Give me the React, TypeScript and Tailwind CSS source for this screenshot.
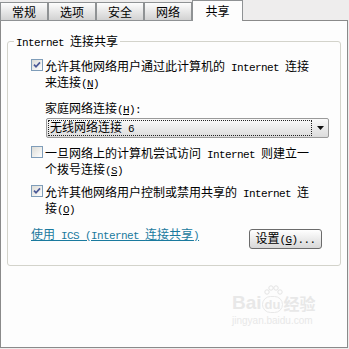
import React from "react";

function L({ children }: { children: React.ReactNode }) {
  return (
    <span className="font-['Liberation_Mono',monospace] text-[11px] tracking-[-0.6px]">
      {children}
    </span>
  );
}

function Check({ checked }: { checked: boolean }) {
  return (
    <div className="w-[12px] h-[12px] shrink-0 border border-[#7f9db9] bg-linear-to-br from-[#dcdcd7] to-white flex items-center justify-center">
      {checked && (
        <svg width="8" height="8" viewBox="0 0 8 8">
          <path d="M1 3.6 L3 5.8 L7 1.4" stroke="#4a5896" strokeWidth="1.7" fill="none" />
        </svg>
      )}
    </div>
  );
}

function Tab({ label, selected }: { label: string; selected?: boolean }) {
  if (selected) {
    return (
      <div className="w-[51px] h-[21px] bg-[#fdfdfd] border border-b-0 border-[#8f9294] flex items-start justify-center pt-[3px] leading-[14px]">
        {label}
      </div>
    );
  }
  return (
    <div className="w-[48px] h-[19px] bg-linear-to-b from-[#fdfdfd] to-[#d2d2d2] border border-[#8f9294] flex items-start justify-center pt-[2px] leading-[14px]">
      {label}
    </div>
  );
}

export default function App() {
  return (
    <div className="relative w-[349px] h-[349px] overflow-hidden bg-[#eeeded] text-black font-['Noto_Sans_CJK_SC',sans-serif] text-[12px] leading-[13px]">
      <div className="relative z-10 flex items-end h-[21px]">
        <Tab label="常规" />
        <Tab label="选项" />
        <Tab label="安全" />
        <Tab label="网络" />
        <Tab label="共享" selected />
      </div>
      <div className="mt-[-1px] w-[348px] h-[328px] bg-[#fdfdfd] border border-[#8a8a8a] flex flex-col">
        <div className="relative ml-[6px] mt-[20px] w-[334px] border border-[#d3d3cb] rounded-[3px] pt-[17px] pb-[16px]">
          <div className="absolute left-[6px] top-[-8px] px-[2px] bg-[#fdfdfd] whitespace-nowrap">
            <L>Internet </L>连接共享
          </div>

          <div className="flex items-start gap-[2px] pl-[23px]">
            <Check checked />
            <div className="whitespace-nowrap">
              <div>
                允许其他网络用户通过此计算机的<L> Internet </L>连接
              </div>
              <div>
                来连接<L>(<span className="underline">N</span>)</L>
              </div>
            </div>
          </div>

          <div className="mt-[10px] pl-[37px] whitespace-nowrap">
            家庭网络连接<L>(<span className="underline">H</span>):</L>
          </div>

          <div className="mt-[1px] ml-[38px] w-[283px] h-[20px] border border-[#9a9a9a] rounded-[2px] bg-linear-to-b from-[#fafafa] to-[#dcdcdc] flex">
            <div className="flex-1 p-[1px]">
              <div className="h-full border border-dotted border-[#222] flex items-center pl-[1px] whitespace-pre">
                <span>
                  无线网络连接<L> 6</L>
                </span>
              </div>
            </div>
            <div className="w-[15px] flex items-center justify-center">
              <svg width="7" height="4" viewBox="0 0 7 4">
                <path d="M0 0 H7 L3.5 4 Z" fill="#111" />
              </svg>
            </div>
          </div>

          <div className="mt-[8px] flex items-start gap-[2px] pl-[23px]">
            <Check checked={false} />
            <div className="whitespace-nowrap">
              <div>
                一旦网络上的计算机尝试访问<L> Internet </L>则建立一
              </div>
              <div>
                个拨号连接<L>(<span className="underline">S</span>)</L>
              </div>
            </div>
          </div>

          <div className="mt-[7px] flex items-start gap-[2px] pl-[23px]">
            <Check checked />
            <div className="whitespace-nowrap">
              <div>
                允许其他网络用户控制或禁用共享的<L> Internet </L>连
              </div>
              <div>
                接<L>(<span className="underline">O</span>)</L>
              </div>
            </div>
          </div>

          <div className="mt-[10px] flex items-start justify-between pl-[23px] pr-[18px]">
            <div className="text-[#1a7a9e] underline whitespace-nowrap">
              使用<L> ICS (Internet </L>连接共享<L>)</L>
            </div>
            <div className="mt-[2px] w-[73px] h-[20px] border border-[#6b6b6b] rounded-[3px] bg-linear-to-b from-white to-[#d8d8d8] flex items-center justify-center whitespace-nowrap">
              <span>
                设置<L>(<span className="underline">G</span>)...</L>
              </span>
            </div>
          </div>
        </div>
      </div>

      <div className="absolute left-[232px] top-[293px] w-[92px] h-[44px] pointer-events-none text-[#e8e8e8]">
        <div className="flex items-end font-['Liberation_Sans',sans-serif] text-[19px] leading-[20px] font-bold">
          <span>Bai</span>
          <span className="relative flex flex-col items-center">
            <svg width="20" height="12" viewBox="0 0 20 12" className="absolute -top-[11px]">
              <circle cx="4" cy="7" r="2.2" fill="none" stroke="#e4e4e4" />
              <circle cx="8" cy="3" r="2.2" fill="none" stroke="#e4e4e4" />
              <circle cx="13" cy="3" r="2.2" fill="none" stroke="#e4e4e4" />
              <circle cx="17" cy="7" r="2.2" fill="none" stroke="#e4e4e4" />
            </svg>
            <span className="text-[13px] px-[2px] border border-[#e8e8e8] rounded-full leading-[15px]">du</span>
          </span>
          <span className="font-['Noto_Sans_CJK_SC',sans-serif] text-[16px]">经验</span>
        </div>
        <div className="mt-[3px] font-['Liberation_Sans',sans-serif] text-[10px] leading-[10px] text-[#e8e8e8]">
          jingyan.baidu.com
        </div>
      </div>
    </div>
  );
}
